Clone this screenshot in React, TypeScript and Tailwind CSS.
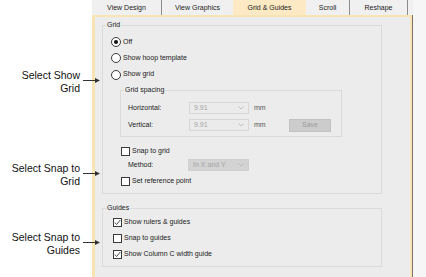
import React from "react";

const ui = { fontFamily: '"Liberation Sans", Arial, sans-serif' };

function Arrow() {
  return (
    <svg width="18" height="7" viewBox="0 0 18 7" className="mt-[8px] ml-[3px] shrink-0">
      <line x1="0" y1="3.5" x2="13" y2="3.5" stroke="#333" strokeWidth="1" />
      <polygon points="12,1 17,3.5 12,6" fill="#333" />
    </svg>
  );
}

function Note({ lines, className }: { lines: string[]; className?: string }) {
  return (
    <div className={`flex items-start ${className ?? ""}`}>
      <div className="w-[80px] shrink-0 text-right text-[10.5px] leading-[13px] text-[#111]">
        {lines.map((l) => (
          <div key={l}>{l}</div>
        ))}
      </div>
      <Arrow />
    </div>
  );
}

function Radio({ checked, label }: { checked?: boolean; label: string }) {
  return (
    <div className="flex items-center gap-[2px]">
      <span className="flex h-[10px] w-[10px] items-center justify-center rounded-full border border-[#3a3a3a] bg-white">
        {checked && <span className="h-[4px] w-[4px] rounded-full bg-[#111]" />}
      </span>
      <span>{label}</span>
    </div>
  );
}

function Check({ checked, label }: { checked?: boolean; label: string }) {
  return (
    <div className="flex items-center gap-[2px]">
      <span className="flex h-[9px] w-[9px] items-center justify-center border border-[#3a3a3a] bg-white">
        {checked && (
          <svg width="7" height="7" viewBox="0 0 7 7">
            <polyline points="0.8,3.6 2.6,5.5 6.3,1" fill="none" stroke="#333" strokeWidth="0.9" />
          </svg>
        )}
      </span>
      <span>{label}</span>
    </div>
  );
}

function Chevron() {
  return (
    <svg width="6" height="4" viewBox="0 0 6 4" className="ml-auto mr-[4px]">
      <polyline points="0.5,0.5 3,3 5.5,0.5" fill="none" stroke="#b4b4b4" strokeWidth="0.8" />
    </svg>
  );
}

function Combo({ value, dark, width }: { value: string; dark?: boolean; width: string }) {
  return (
    <div
      className={`flex h-[12px] items-center border pl-[4px] text-[#a3a3a3] ${width} ${
        dark ? "border-[#cfcfcf] bg-[#d3d3d3]" : "border-[#d7d7d7] bg-[#ebebeb]"
      }`}
    >
      <span>{value}</span>
      <Chevron />
    </div>
  );
}

function Group({ title, className, children }: { title: string; className?: string; children: React.ReactNode }) {
  return (
    <div className={`relative border border-[#dadada] ${className ?? ""}`}>
      <span className="absolute -top-[6px] left-[3px] bg-[#ececec] px-[1px] leading-[10px]">{title}</span>
      {children}
    </div>
  );
}

const tabs = [
  { label: "View Design", w: "w-[70px]", border: "border-r border-[#8c8c8c]" },
  { label: "View Graphics", w: "w-[71px]", border: "" },
  { label: "Grid & Guides", w: "w-[73px]", active: true, border: "" },
  { label: "Scroll", w: "w-[44px]", border: "border-r border-[#8c8c8c]" },
  { label: "Reshape", w: "w-[58px]", border: "border-r border-[#8c8c8c]" },
];

export default function App() {
  return (
    <div className="flex h-[277px] w-[426px] overflow-hidden bg-white" style={ui}>
      {/* callouts */}
      <div className="relative z-10 w-[92px] shrink-0 pt-[69px]">
        <Note lines={["Select Show", "Grid"]} />
        <Note lines={["Select Snap to", "Grid"]} className="mt-[67px]" />
        <Note lines={["Select Snap to", "Guides"]} className="mt-[43px]" />
      </div>

      {/* dialog */}
      <div className="flex w-[321px] shrink-0 flex-col text-[7px] text-[#1a1a1a]">
        <div className="flex h-[15px] bg-[#f0f0f0]">
          {tabs.map((t) => (
            <div
              key={t.label}
              className={`flex items-center justify-center ${t.w} ${
                t.active ? "bg-[#fde9c3]" : ""
              } ${t.border}`}
            >
              <span className="leading-none">{t.label}</span>
            </div>
          ))}
        </div>

        <div className="flex-1 border-r border-[#7a7468]">
          <div className="h-full border-t-2 border-r-2 border-l-[3px] border-[#f8e4b4] bg-[#ececec] pt-[8px] pl-[7px]">
            <Group title="Grid" className="w-[280px] pt-[8px] pb-[4px]">
              <div className="pl-[8px]">
                <div className="flex h-[16px] items-center">
                  <Radio checked label="Off" />
                </div>
                <div className="flex h-[16px] items-center">
                  <Radio label="Show hoop template" />
                </div>
                <div className="flex h-[17px] items-center">
                  <Radio label="Show grid" />
                </div>
              </div>

              <Group title="Grid spacing" className="mt-[7px] ml-[17px] w-[222px] pt-[11px] pb-[5px] pl-[7px]">
                <div className="flex h-[12px] items-center">
                  <span className="w-[61px]">Horizontal:</span>
                  <Combo value="9.91" width="w-[60px]" />
                  <span className="ml-[5px] text-[#555]">mm</span>
                </div>
                <div className="mt-[5px] flex h-[12px] items-center">
                  <span className="w-[61px]">Vertical:</span>
                  <Combo value="9.91" width="w-[60px]" />
                  <span className="ml-[5px] w-[12px] text-[#555]">mm</span>
                  <div className="ml-[23px] flex h-[13px] w-[42px] items-center justify-center border border-[#c2c2c2] bg-[#cccccc] text-[#9c9c9c]">
                    Save
                  </div>
                </div>
              </Group>

              <div className="mt-[6px] flex h-[16px] items-center pl-[18px]">
                <Check label="Snap to grid" />
              </div>
              <div className="flex h-[12px] items-center pl-[25px]">
                <span className="w-[60px]">Method:</span>
                <Combo value="In X and Y" dark width="w-[61px]" />
              </div>
              <div className="mt-[2px] flex h-[16px] items-center pl-[18px]">
                <Check label="Set reference point" />
              </div>
            </Group>

            <Group title="Guides" className="mt-[14px] w-[280px] pt-[6px] pb-[4px] pl-[10px]">
              <div className="flex h-[15px] items-center">
                <Check checked label="Show rulers & guides" />
              </div>
              <div className="flex h-[16px] items-center">
                <Check label="Snap to guides" />
              </div>
              <div className="flex h-[16px] items-center">
                <Check checked label="Show Column C width guide" />
              </div>
            </Group>
          </div>
        </div>
      </div>

      <div className="flex-1 bg-[#f6f6f6]" />
    </div>
  );
}
